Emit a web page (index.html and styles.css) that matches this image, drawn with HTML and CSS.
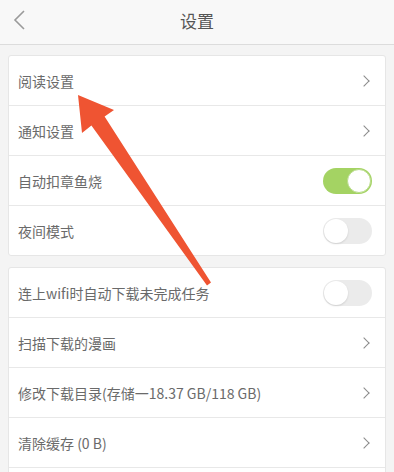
FILE: index.html
```html
<!DOCTYPE html>
<html>
	<head>
		<meta charset="utf-8">
		<link rel="stylesheet" href="styles.css">
	</head>
	<body>
		<div id="header">
			<svg class="back" width="14" height="20" viewBox="0 0 14 20"><path d="M12 1 L3 10 L12 19" fill="none" stroke="#9a9a9a" stroke-width="1.6"/></svg>
			<div class="title">设置</div>
		</div>
		<div class="card first">
			<div class="row"><span class="label">阅读设置</span><span class="chev"></span></div>
			<div class="row"><span class="label">通知设置</span><span class="chev"></span></div>
			<div class="row"><span class="label">自动扣章鱼烧</span><span class="toggle on"></span></div>
			<div class="row"><span class="label">夜间模式</span><span class="toggle"></span></div>
		</div>
		<div class="card">
			<div class="row"><span class="label">连上wifi时自动下载未完成任务</span><span class="toggle"></span></div>
			<div class="row"><span class="label">扫描下载的漫画</span><span class="chev"></span></div>
			<div class="row"><span class="label">修改下载目录(存储一18.37 GB/118 GB)</span><span class="chev"></span></div>
			<div class="row"><span class="label">清除缓存 (0 B)</span><span class="chev"></span></div>
			<div class="row"></div>
		</div>
		<svg id="pointer" width="394" height="472" viewBox="0 0 394 472">
			<polygon points="78,95 114,110 104.6,116.4 211,282.6 207,285.4 91.4,125.6 82,133" fill="#ef5432"/>
		</svg>
	</body>
</html>
```
FILE: styles.css
```css
html, body{
	margin:0;
	padding:0;
	background-color:#f4f4f4;
	font-family:"Noto Sans CJK SC", "Noto Sans", sans-serif;
	overflow:hidden;
}
#header{
	height:44px;
	background-color:#f8f8f8;
	border-bottom:solid 1px #dcdcdc;
	display:flex;
	align-items:center;
	justify-content:center;
	position:relative;
}
.back{
	position:absolute;
	left:12px;
	top:10px;
}
.title{
	font-size:17px;
	color:#555;
	margin-top:-3px;
}
.card{
	margin:11px 8px 0px 8px;
	background-color:#fff;
	border:solid 1px #e6e6e6;
	border-radius:3px;
}
.card.first{
	margin-top:10px;
}
.row{
	height:49px;
	display:flex;
	align-items:center;
	justify-content:space-between;
	padding:0px 14px 0px 9px;
	border-bottom:solid 1px #e8e8e8;
}
.row:last-child{
	border-bottom:none;
}
.label{
	font-size:14px;
	color:#6a6a6a;
}
.chev{
	width:7px;
	height:7px;
	border-top:solid 1.5px #8a8a8a;
	border-right:solid 1.5px #8a8a8a;
	transform:rotate(45deg);
	margin-right:3px;
}
.toggle{
	width:49px;
	height:26px;
	border-radius:13px;
	background-color:#ebebeb;
	position:relative;
	margin-right:-1px;
}
.toggle::after{
	content:"";
	position:absolute;
	left:1px;
	top:1px;
	width:24px;
	height:24px;
	border-radius:12px;
	background-color:#fff;
	box-shadow:0px 1px 2px rgba(0,0,0,0.12);
}
.toggle.on{
	background-color:#a4d363;
}
.toggle.on::after{
	left:24px;
	box-shadow:none;
	width:22px;
	height:22px;
	border:solid 1px #b8dc8a;
}
#pointer{
	position:absolute;
	left:0;
	top:0;
}
```
